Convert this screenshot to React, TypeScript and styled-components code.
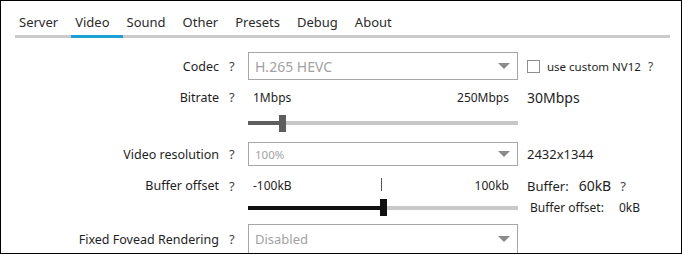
import React from "react";
import styled, { createGlobalStyle } from "styled-components";

const GlobalStyle = createGlobalStyle`
  html, body {
    margin: 0;
    padding: 0;
    background: #ffffff;
  }
  body {
    font-family: "Noto Sans", "Open Sans", sans-serif;
    color: #1e1e1e;
  }
`;

const Window = styled.div`
  box-sizing: border-box;
  width: 682px;
  height: 254px;
  border: 1px solid #000;
  background: #fff;
  overflow: hidden;
`;

const TabBar = styled.div`
  display: flex;
  margin: 8px 11px 0 14px;
  height: 26px;
  border-bottom: 3px solid #cacaca;
`;

const Tab = styled.div<{ $active?: boolean }>`
  display: flex;
  align-items: center;
  padding: 0 13px 0 4px;
  margin-bottom: -3px;
  font-size: 13px;
  color: #2a2a2a;
  border-bottom: 3px solid ${(p) => (p.$active ? "#1aa0d2" : "transparent")};
`;

const Form = styled.div`
  padding-top: 14px;
`;

const Row = styled.div<{ $h: number }>`
  display: grid;
  grid-template-columns: 218px 29px 270px 1fr;
  align-items: center;
  height: ${(p) => p.$h}px;
`;

const Label = styled.div`
  text-align: right;
  font-size: 12.5px;
  color: #1e1e1e;
  white-space: nowrap;
`;

const Help = styled.span<{ $size?: number }>`
  font-size: ${(p) => p.$size ?? 13}px;
  color: #444;
  padding-left: 10px;
`;

const Select = styled.div<{ $h: number; $size: number }>`
  box-sizing: border-box;
  height: ${(p) => p.$h}px;
  border: 1px solid #a6a6a6;
  display: flex;
  align-items: center;
  justify-content: space-between;
  padding: 0 7px 0 6px;
  font-size: ${(p) => p.$size}px;
  color: #a2a2a2;
  align-self: ${(p) => (p.$h > 26 ? "start" : "center")};
`;

const Arrow = () => (
  <svg width="12" height="6" viewBox="0 0 12 6">
    <path d="M0 0 L12 0 L6 6 Z" fill="#8a8a8a" />
  </svg>
);

const Extra = styled.div`
  display: flex;
  align-items: center;
  padding-left: 9px;
  white-space: nowrap;
`;

const Check = styled.span`
  box-sizing: border-box;
  width: 13px;
  height: 13px;
  border: 1px solid #8e8e8e;
  margin-right: 7px;
`;

const SmallText = styled.span<{ $size?: number; $gap?: number }>`
  font-size: ${(p) => p.$size ?? 12}px;
  color: #1e1e1e;
  margin-left: ${(p) => p.$gap ?? 0}px;
`;

const BigText = styled.span<{ $size?: number; $gap?: number }>`
  font-size: ${(p) => p.$size ?? 14}px;
  color: #1e1e1e;
  margin-left: ${(p) => p.$gap ?? 0}px;
`;

const Scale = styled.div`
  display: flex;
  justify-content: space-between;
  align-items: center;
  padding: 0 9px 0 5px;
  font-size: 12px;
  color: #1e1e1e;
  position: relative;
`;

const Tick = styled.span`
  position: absolute;
  left: 133px;
  top: 1px;
  width: 1px;
  height: 13px;
  background: #555;
`;

const Track = styled.div`
  position: relative;
  height: 17px;
  display: flex;
  align-items: center;
`;

const Rail = styled.div`
  position: absolute;
  left: 0;
  right: 0;
  height: 4px;
  background: #c8c8c8;
  overflow: hidden;
`;

const Fill = styled.div<{ $color: string }>`
  height: 100%;
  background: ${(p) => p.$color};
`;

const Thumb = styled.div<{ $color: string }>`
  position: absolute;
  top: 0;
  width: 7px;
  height: 17px;
  background: ${(p) => p.$color};
`;

function Slider({ value, min, max, color }: { value: number; min: number; max: number; color: string }) {
  const ratio = (value - min) / (max - min);
  const x = ratio * (270 - 7);
  return (
    <Track>
      <Rail>
        <Fill $color={color} style={{ width: x + 3 }} />
      </Rail>
      <Thumb $color={color} style={{ left: x }} />
    </Track>
  );
}

const tabs = ["Server", "Video", "Sound", "Other", "Presets", "Debug", "About"];

export default function App() {
  return (
    <>
      <GlobalStyle />
      <Window>
        <TabBar>
          {tabs.map((t) => (
            <Tab key={t} $active={t === "Video"}>
              {t}
            </Tab>
          ))}
        </TabBar>
        <Form>
          <Row $h={28}>
            <Label>Codec</Label>
            <Help>?</Help>
            <Select $h={28} $size={14}>
              H.265 HEVC
              <Arrow />
            </Select>
            <Extra>
              <Check />
              <SmallText $size={11.5}>use custom NV12</SmallText>
              <Help $size={12} style={{ paddingLeft: 7 }}>?</Help>
            </Extra>
          </Row>
          <Row $h={34}>
            <Label>Bitrate</Label>
            <Help>?</Help>
            <Scale>
              <span>1Mbps</span>
              <span>250Mbps</span>
            </Scale>
            <Extra>
              <BigText>30Mbps</BigText>
            </Extra>
          </Row>
          <Row $h={18}>
            <span />
            <span />
            <Slider value={30} min={1} max={250} color="#5e5e5e" />
          </Row>
          <Row $h={44}>
            <Label>Video resolution</Label>
            <Help>?</Help>
            <Select $h={24} $size={11.5}>
              100%
              <Arrow />
            </Select>
            <Extra>
              <BigText $size={13}>2432x1344</BigText>
            </Extra>
          </Row>
          <Row $h={15}>
            <Label>Buffer offset</Label>
            <Help>?</Help>
            <Scale>
              <span>-100kB</span>
              <Tick />
              <span>100kb</span>
            </Scale>
            <Extra>
              <SmallText $size={13}>Buffer:</SmallText>
              <BigText $gap={10}>60kB</BigText>
              <Help $size={13} style={{ paddingLeft: 9 }}>?</Help>
            </Extra>
          </Row>
          <Row $h={33}>
            <span />
            <span />
            <Slider value={0} min={-100} max={100} color="#111" />
            <Extra style={{ paddingLeft: 12 }}>
              <SmallText>Buffer offset:</SmallText>
              <SmallText $gap={15}>0kB</SmallText>
            </Extra>
          </Row>
          <Row $h={30}>
            <Label>Fixed Fovead Rendering</Label>
            <Help>?</Help>
            <Select $h={30} $size={13}>
              Disabled
              <Arrow />
            </Select>
          </Row>
        </Form>
      </Window>
    </>
  );
}
